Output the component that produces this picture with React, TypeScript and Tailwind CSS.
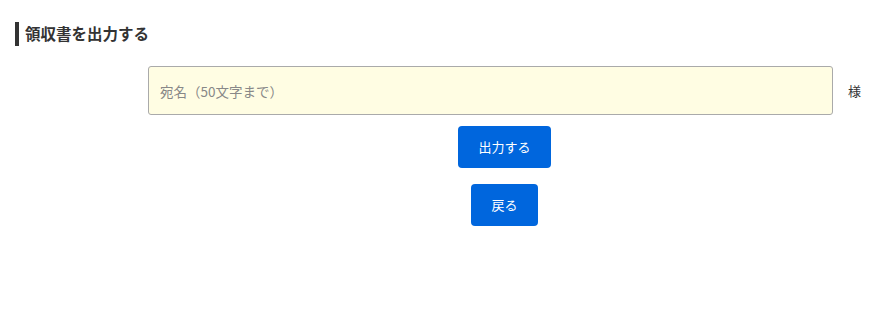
import React from "react";

export default function App() {
  return (
    <div
      className="w-[888px] h-[315px] bg-white text-[#333]"
      style={{ fontFamily: '"Noto Sans CJK JP", "Noto Sans", sans-serif' }}
    >
      <div className="pt-[22px] pl-[15px]">
        <h2 className="border-l-4 border-[#333] pl-[6px] h-[24px] flex items-center text-[15.5px] font-bold leading-none text-[#333]">
          領収書を出力する
        </h2>
      </div>
      <div className="ml-[148px] w-[713px] mt-[20px]">
        <div className="flex items-center">
          <input
            className="w-[685px] h-[49px] bg-[#fffde3] border border-[#aaa] rounded-[3px] px-[11px] text-[13.5px] text-[#333] placeholder:text-[#888] outline-none"
            placeholder="宛名（50文字まで）"
          />
          <span className="ml-[15px] text-[13px] text-[#333]">様</span>
        </div>
        <div className="flex flex-col items-center mt-[11px] gap-[16px]">
          <button className="h-[42px] px-[20px] bg-[#0066dd] text-white text-[13px] rounded-[4px]">
            出力する
          </button>
          <button className="h-[42px] px-[20px] bg-[#0066dd] text-white text-[13px] rounded-[4px]">
            戻る
          </button>
        </div>
      </div>
    </div>
  );
}
